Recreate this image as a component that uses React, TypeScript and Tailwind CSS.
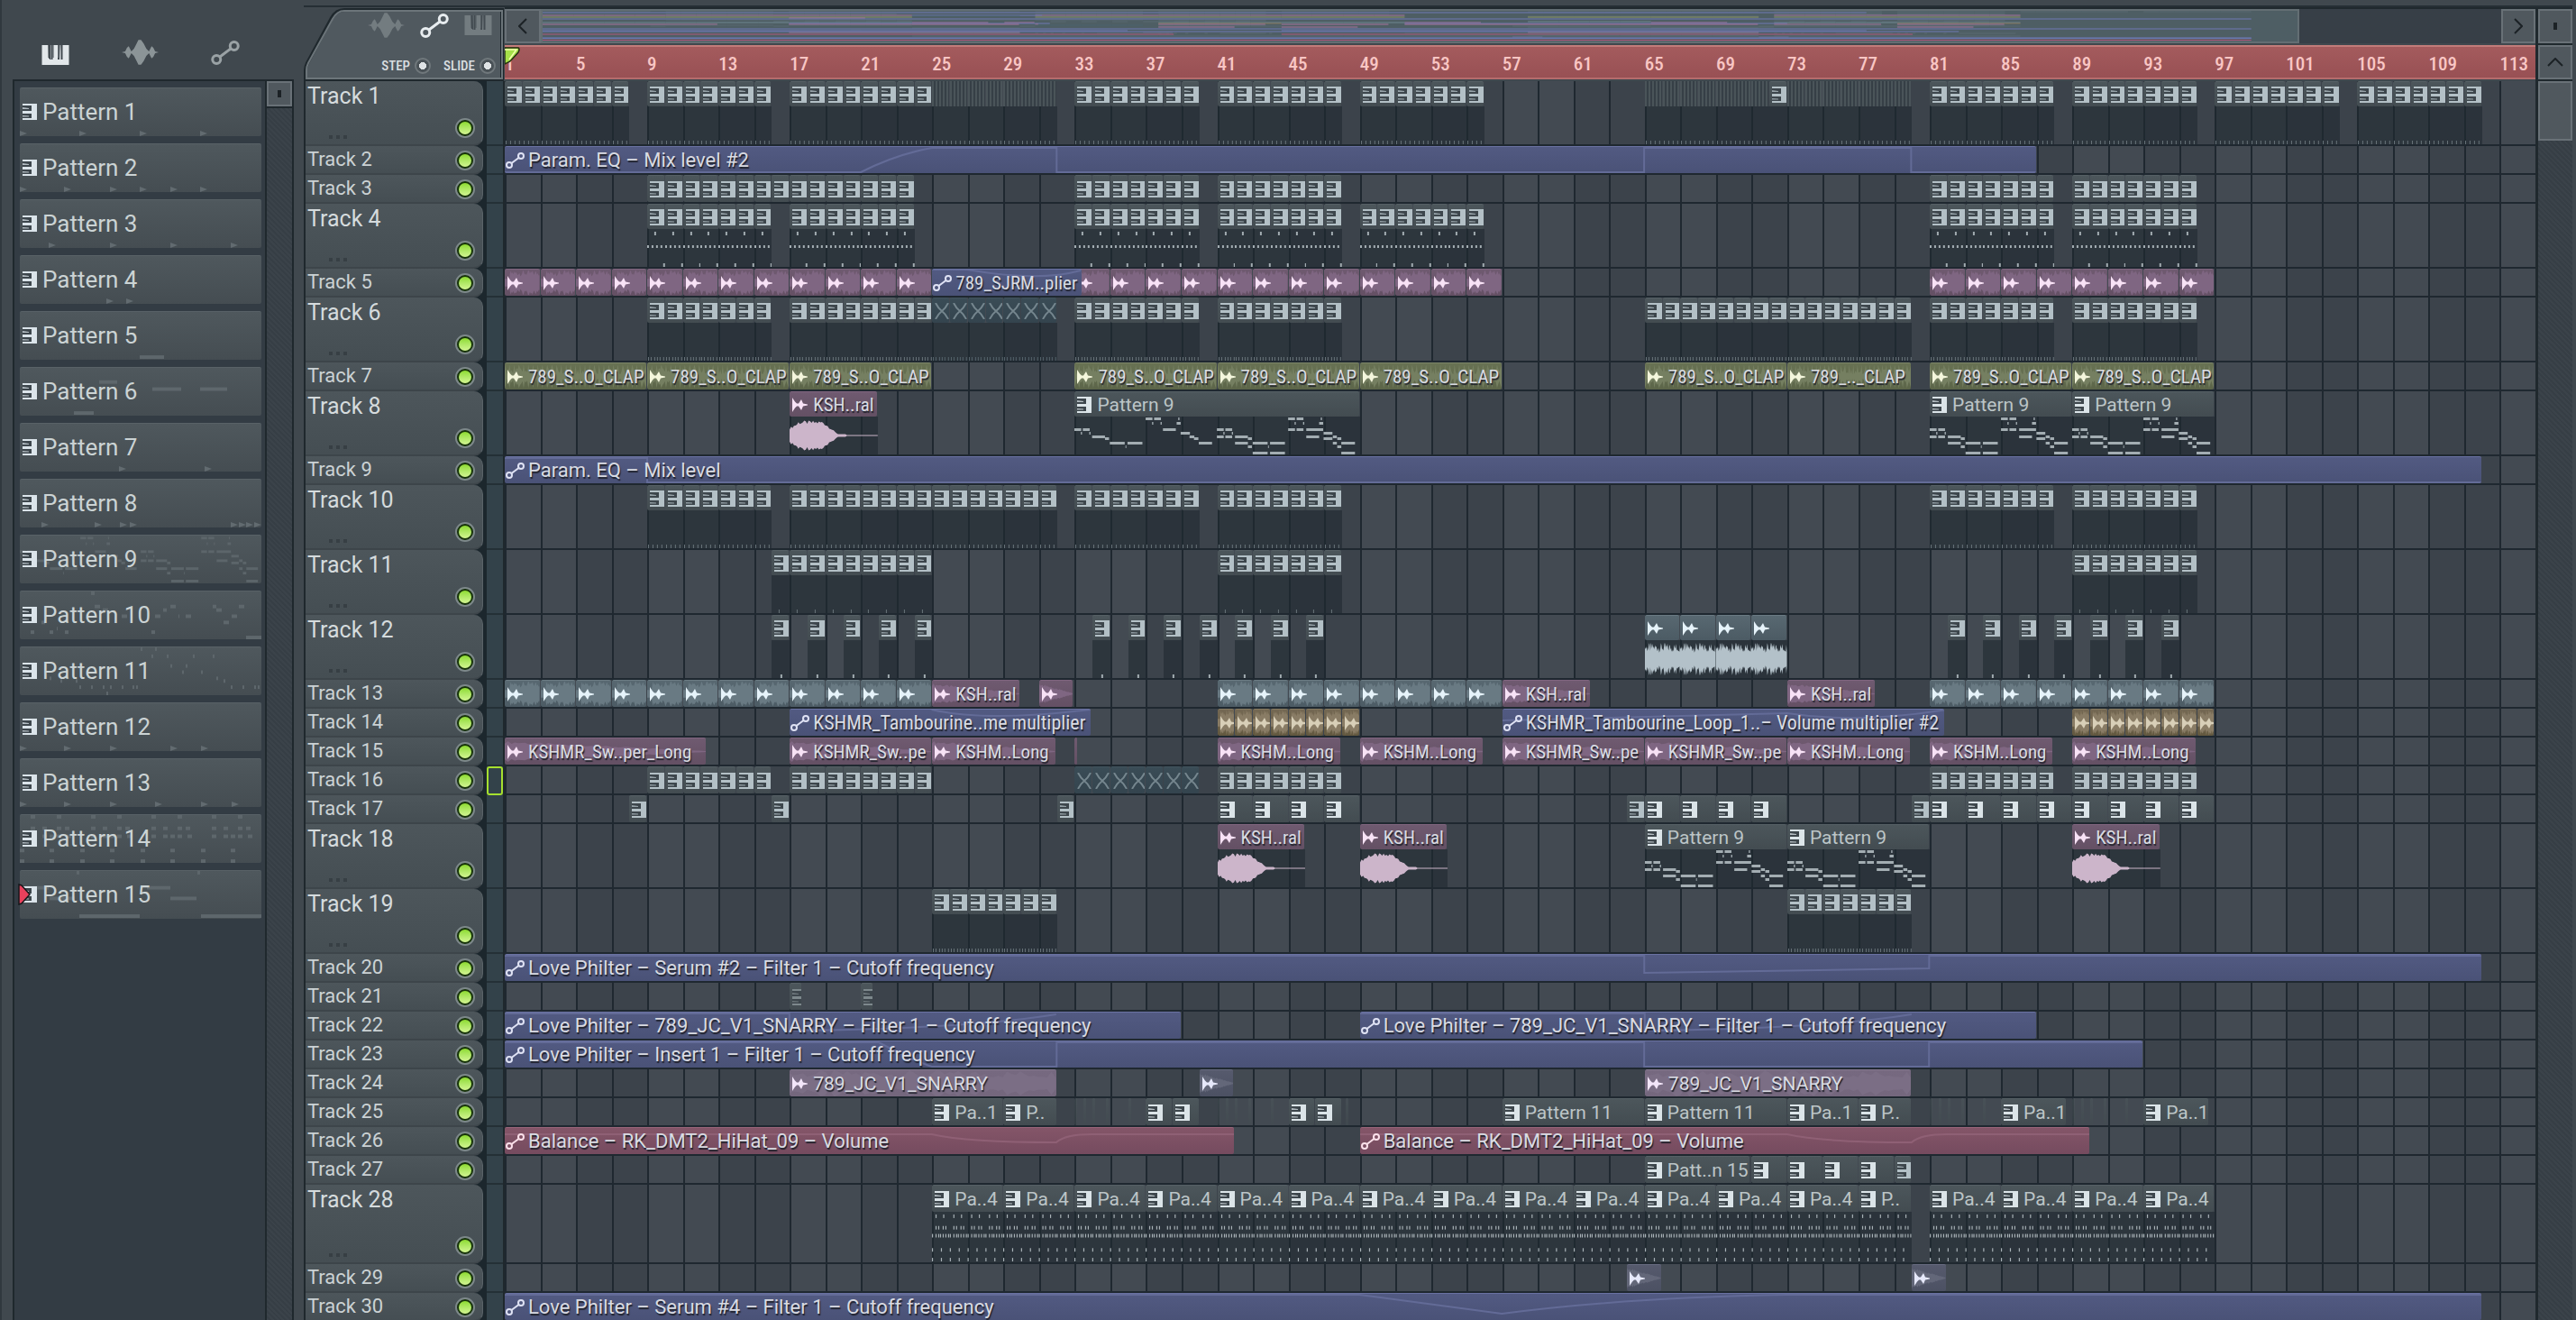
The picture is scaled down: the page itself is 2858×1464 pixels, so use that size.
import type { ReactNode } from "react"

type Kind = "pattern" | "audio" | "automation" | "muted" | "stripes" | "sliver"

type Tone =
  | "grey"
  | "blue"
  | "pink"
  | "olive"
  | "slate"
  | "brown"
  | "purple"
  | "red"
  | "dusk"
  | "teal"

type Clip = {
  kind: Kind
  tone: Tone
  start: number
  length: number
  label?: string
  narrow?: boolean
  curve?: string
  body?: string
}

type Track = {
  id: number
  size: "small" | "tall" | "large"
  clips: Clip[]
}

const BARS = 114

const toneClass: Record<Tone, string> = {
  grey: "from-[#4c565b] to-[#434c51] border-t-[#566065]",
  blue: "from-[#525a82] to-[#4a5277] border-t-[#6a72a2]",
  pink: "from-[#6f5a70] to-[#645064] border-t-[#80657f]",
  olive: "from-[#687253] to-[#5c6549] border-t-[#7b8468]",
  slate: "from-[#586871] to-[#4c5b64] border-t-[#6b7b83]",
  brown: "from-[#746853] to-[#62583f] border-t-[#867960]",
  purple: "from-[#766980] to-[#74677d] border-t-[#85788f]",
  red: "from-[#845568] to-[#754b5f] border-t-[#996579]",
  dusk: "from-[#565a6d] to-[#4c5163] border-t-[#676b80]",
  teal: "from-[#3a4c56] to-[#34444e] border-t-[#42545e]",
}

const iconClass: Record<Tone, string> = {
  grey: "text-[#dbe4e8]",
  blue: "text-[#dfe2f4]",
  pink: "text-[#f8e2f6]",
  olive: "text-[#f4f6dc]",
  slate: "text-[#e6f3fa]",
  brown: "text-[#d8cfb8]",
  purple: "text-[#f3e6fa]",
  red: "text-[#fbe0ea]",
  dusk: "text-[#e6e8fa]",
  teal: "text-[#75868e]",
}

const toneFill: Record<Tone, string> = {
  grey: "#66757b",
  blue: "#6f78b4",
  pink: "#a7759d",
  olive: "#8b9665",
  slate: "#6e8590",
  brown: "#86795c",
  purple: "#8f7a9d",
  red: "#b0587c",
  dusk: "#6d7190",
  teal: "#4b626d",
}

const waveFill: Record<Tone, string> = {
  grey: "#5c666b",
  blue: "#5b6390",
  pink: "#7f6682",
  olive: "#757f61",
  slate: "#697a83",
  brown: "#897c65",
  purple: "#7b6e85",
  red: "#8b6072",
  dusk: "#636779",
  teal: "#42545e",
}

const repeat = (
  starts: number[],
  count: number,
  step: number,
  base: Omit<Clip, "start" | "length">,
  length = step,
): Clip[] =>
  starts.flatMap((first) =>
    Array.from({ length: count }, (_, i) => ({
      ...base,
      start: first + i * step,
      length,
    })),
  )

const pat = (body?: string) => ({ kind: "pattern" as Kind, tone: "grey" as Tone, body })
const named = (start: number, length: number, label: string, body?: string): Clip => ({
  ...pat(body),
  start,
  length,
  label,
})
const audio = (tone: Tone) => ({ kind: "audio" as Kind, tone })
const sample = (tone: Tone, start: number, length: number, label?: string, body?: string): Clip => ({
  ...audio(tone),
  start,
  length,
  label,
  narrow: true,
  body,
})
const auto = (
  start: number,
  length: number,
  label: string,
  curve?: string,
  tone: Tone = "blue",
  narrow = false,
): Clip => ({ kind: "automation", tone, start, length, label, curve, narrow })
const slivers = (starts: number[]): Clip[] =>
  starts.map((start) => ({ kind: "sliver", tone: "grey", start, length: 0.2 }))
const muted = (starts: number[]) =>
  repeat(starts, 7, 1, { kind: "muted", tone: "teal", body: "fine" })

const BALANCE = "Balance – RK_DMT2_HiHat_09 – Volume"
const SNARRY = "Love Philter – 789_JC_V1_SNARRY – Filter 1 – Cutoff frequency"
const CLAP = "789_S..O_CLAP"

const tracks: Track[] = [
  {
    id: 1,
    size: "tall",
    clips: [
      ...repeat([1, 9, 33, 41, 49, 81, 89, 97, 105], 7, 1, pat("ticks")),
      ...repeat([17], 8, 1, pat("ticks")),
      ...repeat([25], 7, 1, { kind: "stripes", tone: "grey", body: "ticks" }),
      ...repeat([65], 7, 1, { kind: "stripes", tone: "grey", body: "ticks" }),
      ...repeat([72], 1, 1, pat("ticks")),
      ...repeat([73], 7, 1, { kind: "stripes", tone: "grey", body: "ticks" }),
    ],
  },
  {
    id: 2,
    size: "small",
    clips: [auto(1, 86, "Param. EQ – Mix level #2", "M0 28H20Q22 8 24 1H31V28H64V1H79V28H86")],
  },
  {
    id: 3,
    size: "small",
    clips: [...repeat([9], 15, 1, pat()), ...repeat([33, 41, 81, 89], 7, 1, pat())],
  },
  { id: 4, size: "tall", clips: repeat([9, 17, 33, 41, 49, 81, 89], 7, 1, pat("beats")) },
  {
    id: 5,
    size: "small",
    clips: [
      ...repeat([1], 12, 2, audio("pink")),
      ...repeat([33], 12, 2, audio("pink")),
      ...repeat([81], 8, 2, audio("pink")),
      auto(25, 8.45, "789_SJRM..plier", "M0 0H2Q6 14 8.4 1", "blue", true),
    ],
  },
  {
    id: 6,
    size: "tall",
    clips: [
      ...repeat([9, 33, 41, 81, 89], 7, 1, pat("fine")),
      ...repeat([17], 8, 1, pat("fine")),
      ...muted([25]),
      ...repeat([65], 15, 1, pat("fine")),
    ],
  },
  {
    id: 7,
    size: "small",
    clips: [
      ...[1, 9, 17, 33, 41, 49, 65, 81, 89].map((bar) => sample("olive", bar, 8, CLAP)),
      sample("olive", 73, 7, "789_.._CLAP"),
    ],
  },
  {
    id: 8,
    size: "tall",
    clips: [
      sample("pink", 17, 4.95, "KSH..ral", "shot"),
      named(33, 16, "Pattern 9", "melody"),
      named(81, 8, "Pattern 9", "chords"),
      named(89, 8, "Pattern 9", "chords"),
    ],
  },
  { id: 9, size: "small", clips: [auto(1, 111, "Param. EQ – Mix level", "M0 1H8V28H111")] },
  {
    id: 10,
    size: "tall",
    clips: [
      ...repeat([9, 33, 41, 81, 89], 7, 1, pat("ticks")),
      ...repeat([17], 15, 1, pat("ticks")),
    ],
  },
  {
    id: 11,
    size: "tall",
    clips: [...repeat([16], 9, 1, pat("kick")), ...repeat([41, 89], 7, 1, pat("kick"))],
  },
  {
    id: 12,
    size: "tall",
    clips: [
      ...repeat([16], 5, 2, pat("single"), 1),
      ...repeat([34, 82], 7, 2, pat("single"), 1),
      ...repeat([65], 4, 2, { ...audio("slate"), body: "noise" }),
    ],
  },
  {
    id: 13,
    size: "small",
    clips: [
      ...repeat([1], 12, 2, audio("slate")),
      sample("pink", 25, 4.95, "KSH..ral"),
      sample("pink", 31, 1.95),
      ...repeat([41, 81], 8, 2, audio("slate")),
      sample("pink", 57, 4.95, "KSH..ral"),
      sample("pink", 73, 4.95, "KSH..ral"),
    ],
  },
  {
    id: 14,
    size: "small",
    clips: [
      auto(17, 16.95, "KSHMR_Tambourine..me multiplier", "M8 0Q11 14 17 0", "blue", true),
      ...repeat([41, 89], 8, 1, audio("brown")),
      auto(
        57,
        24.85,
        "KSHMR_Tambourine_Loop_1..– Volume multiplier #2",
        "M0 12L16 4Q20 16 25 0",
        "blue",
        true,
      ),
    ],
  },
  {
    id: 15,
    size: "small",
    clips: [
      sample("pink", 1, 11.35, "KSHMR_Sw..per_Long"),
      sample("pink", 17, 8, "KSHMR_Sw..pe"),
      sample("pink", 25, 6.95, "KSHM..Long"),
      { kind: "sliver", tone: "pink", start: 33, length: 0.2 },
      sample("pink", 41, 6.95, "KSHM..Long"),
      sample("pink", 49, 6.95, "KSHM..Long"),
      sample("pink", 57, 8, "KSHMR_Sw..pe"),
      sample("pink", 65, 8, "KSHMR_Sw..pe"),
      sample("pink", 73, 6.95, "KSHM..Long"),
      sample("pink", 81, 6.95, "KSHM..Long"),
      sample("pink", 89, 6.95, "KSHM..Long"),
    ],
  },
  {
    id: 16,
    size: "small",
    clips: [
      ...repeat([9, 41, 81, 89], 7, 1, pat()),
      ...repeat([17], 8, 1, pat()),
      ...muted([33]),
    ],
  },
  {
    id: 17,
    size: "small",
    clips: [
      ...repeat([8, 16, 32, 64, 80], 1, 1, pat()),
      ...repeat([41, 65], 4, 2, pat()),
      ...repeat([81], 8, 2, pat()),
    ],
  },
  {
    id: 18,
    size: "tall",
    clips: [
      sample("pink", 41, 4.95, "KSH..ral", "shot"),
      sample("pink", 49, 4.95, "KSH..ral", "shot"),
      named(65, 8, "Pattern 9", "chords"),
      named(73, 8, "Pattern 9", "chords"),
      sample("pink", 89, 4.95, "KSH..ral", "shot"),
    ],
  },
  { id: 19, size: "tall", clips: repeat([25, 73], 7, 1, pat("fine")) },
  {
    id: 20,
    size: "small",
    clips: [
      auto(1, 111, "Love Philter – Serum #2 – Filter 1 – Cutoff frequency", "M0 1H64V20L80 15V1H111"),
    ],
  },
  { id: 21, size: "small", clips: repeat([17, 21], 1, 1, pat(), 0.7) },
  {
    id: 22,
    size: "small",
    clips: [
      auto(1, 38, SNARRY, "M0 1H16V20Q26 18 31 2"),
      auto(49, 38, SNARRY, "M0 1H16V20Q26 18 31 2"),
    ],
  },
  {
    id: 23,
    size: "small",
    clips: [
      auto(
        1,
        92,
        "Love Philter – Insert 1 – Filter 1 – Cutoff frequency",
        "M0 1H21Q23 22 24 28H31V1H64V28H80V1H92",
      ),
    ],
  },
  {
    id: 24,
    size: "small",
    clips: [
      { ...audio("purple"), start: 17, length: 15, label: "789_JC_V1_SNARRY" },
      sample("dusk", 40, 1.95),
      { ...audio("purple"), start: 65, length: 15, label: "789_JC_V1_SNARRY" },
    ],
  },
  {
    id: 25,
    size: "small",
    clips: [
      named(25, 4, "Pa..1"),
      named(29, 3, "P.."),
      ...slivers([33, 33.5, 34, 34.75, 36, 41, 41.5, 42, 42.75, 44, 48.2]),
      ...repeat([37], 2, 1.5, pat()),
      ...repeat([45], 2, 1.5, pat()),
      named(57, 8, "Pattern 11"),
      named(65, 8, "Pattern 11"),
      named(73, 4, "Pa..1"),
      named(77, 3, "P.."),
      ...slivers([81, 81.5, 82, 82.75, 84, 89, 89.5, 90, 90.75, 92]),
      named(85, 3.7, "Pa..1"),
      named(93, 3.7, "Pa..1"),
    ],
  },
  {
    id: 26,
    size: "small",
    clips: [
      auto(1, 41, BALANCE, "M0 7H24Q26 16 31 16Q31.5 7 33 7H41", "red"),
      auto(49, 41, BALANCE, "M0 7H24Q26 16 31 16Q31.5 7 33 7H41", "red"),
    ],
  },
  {
    id: 27,
    size: "small",
    clips: [
      named(65, 5.95, "Patt..n 15"),
      ...repeat([71], 4, 2, pat()),
      ...repeat([79], 1, 1, pat()),
    ],
  },
  {
    id: 28,
    size: "large",
    clips: [
      ...repeat([25], 13, 4, { ...pat("drums"), label: "Pa..4" }),
      named(77, 3, "P..", "drums"),
      ...repeat([81], 4, 4, { ...pat("drums"), label: "Pa..4" }),
    ],
  },
  { id: 29, size: "small", clips: [sample("dusk", 64, 1.95), sample("dusk", 80, 1.95)] },
  {
    id: 30,
    size: "small",
    clips: [
      auto(
        1,
        111,
        "Love Philter – Serum #4 – Filter 1 – Cutoff frequency",
        "M0 1H48L56 22Q63 4 72 1H111",
      ),
    ],
  },
]

// [x, y, width] on a 354 x 43 grid that spans eight bars
type Note = [number, number, number]

const melody: Note[] = [
  [0, 13, 17], [21, 13, 17], [16, 17, 3], [37, 17, 3], [44, 21, 32], [76, 23, 10],
  [88, 28, 37], [132, 28, 37], [127, 32, 2], [177, 1, 17], [198, 1, 17], [193, 6, 3],
  [214, 6, 3], [254, 6, 10], [258, 1, 3], [220, 13, 32], [264, 17, 23], [286, 21, 12],
  [297, 23, 11], [309, 28, 33],
]

const chords: Note[] = [
  [0, 13, 17], [21, 13, 17], [16, 17, 3], [37, 17, 3], [0, 21, 17], [21, 21, 17],
  [45, 21, 32], [45, 28, 32], [77, 23, 10], [77, 32, 10], [89, 28, 37], [132, 28, 37],
  [127, 32, 2], [89, 39, 37], [132, 39, 37], [177, 1, 17], [198, 1, 17], [193, 6, 3],
  [214, 6, 3], [254, 6, 10], [258, 1, 3], [177, 13, 17], [198, 13, 17], [222, 13, 42],
  [222, 21, 32], [265, 17, 22], [265, 23, 22], [288, 21, 10], [299, 23, 10], [288, 28, 10],
  [299, 32, 10], [309, 28, 34], [309, 39, 34],
]

const fullPattern9: Note[] = [
  ...melody,
  ...chords.map(([x, y, w]): Note => [x + 354, y, w]),
]

// [x, y, width] on the 268 x 54 face of a picker button
const pattern14: Note[] = [0, 67, 134, 201].flatMap((x): Note[] => [
  [x + 12, 0, 5], [x + 41, 0, 5],
  [x + 12, 13, 5], [x + 25, 13, 5], [x + 41, 13, 5], [x + 50, 13, 5],
  [x + 12, 22, 5], [x + 25, 22, 5], [x + 33, 22, 5], [x + 41, 22, 5], [x + 52, 22, 5],
  [x, 38, 5], [x + 33, 38, 5], [x, 50, 5], [x + 33, 50, 5],
])

const previews: Record<number, Note[]> = {
  5: [[133, 49, 27]],
  6: [[88, 14, 20], [147, 22, 32], [200, 22, 30], [60, 49, 22]],
  10: [
    [79, 0, 4], [83, 15, 6], [92, 19, 6], [113, 26, 6], [24, 33, 4], [12, 44, 4], [33, 44, 4],
    [41, 40, 1], [50, 44, 4], [150, 26, 6], [159, 19, 4], [167, 15, 6], [176, 26, 1],
    [184, 26, 6], [146, 44, 4], [214, 15, 4], [218, 19, 6], [226, 33, 6], [235, 26, 6],
    [243, 15, 6], [251, 50, 17],
  ],
  11: [
    [134, 0, 2], [150, 0, 2], [146, 8, 2], [163, 8, 2], [192, 8, 2], [214, 8, 2], [167, 19, 2],
    [184, 19, 2], [180, 26, 2], [201, 26, 2], [218, 33, 2], [226, 36, 2], [33, 33, 2],
    [45, 36, 2], [62, 36, 2], [66, 43, 2], [79, 43, 2], [92, 43, 2], [100, 43, 2], [113, 43, 2],
    [125, 43, 2], [129, 43, 2], [96, 50, 2], [234, 43, 2], [247, 43, 2], [260, 43, 2],
    [264, 43, 2],
  ],
  14: pattern14,
  15: [
    [63, 0, 3], [197, 0, 3], [6, 17, 26], [141, 17, 26], [33, 29, 28], [167, 29, 29],
    [66, 49, 67], [201, 49, 67],
  ],
}

const triangles: Record<number, number[]> = {
  1: [0, 66, 133, 200],
  2: [0, 49, 100, 133, 167, 200],
  3: [32, 100, 167, 234],
  4: [96, 118],
  7: [110, 205],
  8: [24, 83, 111, 122, 234, 243, 251, 260],
  12: [0, 49, 100, 167, 201],
  13: [0, 49, 100, 150, 201, 235],
}

function noise(n: number) {
  const v = Math.sin(n * 12.9898) * 43758.5453
  return v - Math.floor(v)
}

// Mirrored outline around the middle of a 100-unit high box
function outline(points: number, level: (t: number, i: number) => number) {
  const top: string[] = []
  const bottom: string[] = []
  for (let i = 0; i <= points; i++) {
    const v = level(i / points, i) * 50
    top.push(`${i},${(50 - v).toFixed(1)}`)
    bottom.unshift(`${i},${(50 + v).toFixed(1)}`)
  }
  return [...top, ...bottom].join(" ")
}

const noiseWave = outline(60, (_, i) => 0.4 + noise(i + 3) * 0.6)
const loopWave = outline(40, (t, i) => (t < 0.15 ? 0.3 : 0.5 + noise(i + 9) * 0.45))
const clapWave = outline(120, (_, i) => (i % 4 === 0 ? 0.9 : 0.15 + noise(i) * 0.5))
const shotWave = outline(60, (t, i) => {
  const envelope = t < 0.1 ? 0.45 + t * 3 : t < 0.38 ? 0.82 : Math.max(0, 0.82 - (t - 0.38) * 4.4)
  return Math.max(0.025, envelope * (0.82 + noise(i) * 0.3), t > 0.5 && t < 0.65 ? 0.08 : 0)
})
const sweepWave = outline(60, (t, i) => (0.75 - t * 0.7) * (0.8 + noise(i) * 0.3))

function PianoIcon({ className = "" }: { className?: string }) {
  return (
    <svg viewBox="0 0 16 18" className={`h-[18px] w-4 shrink-0 ${className}`} aria-hidden="true">
      <path fill="currentColor" d="M0 0H16V18H0V16H10V11H0V8H10V2H0Z" />
      <path fill="#3d464c" d="M0 2H10V8H0ZM0 11H10V16H0Z" />
      <path fill="currentColor" d="M0 4L7 5V6H0ZM0 13L7 13.5V14.500H0Z" opacity=".75" />
    </svg>
  )
}

function SampleIcon({ className = "" }: { className?: string }) {
  return (
    <svg viewBox="0 0 17 16" className={`h-4 w-[17px] shrink-0 ${className}`} aria-hidden="true">
      <path
        fill="currentColor"
        d="M0 0L3 4.500L5 6.500L7 6.500L10 2L12 6.500L17 7.500V8.500L12 9.500L10 14L7 9.500H5L3 11.500L0 16Z"
      />
    </svg>
  )
}

function CurveIcon({ className = "" }: { className?: string }) {
  return (
    <svg viewBox="0 0 21 18" className={className} fill="none" stroke="currentColor" aria-hidden="true">
      <circle cx="4" cy="14" r="3" strokeWidth="2" />
      <circle cx="17" cy="4" r="3" strokeWidth="2" />
      <path d="M6.500 12L14.500 6" strokeWidth="2" />
    </svg>
  )
}

function KeysIcon({ className = "" }: { className?: string }) {
  return (
    <svg viewBox="0 0 30 22" className={className} aria-hidden="true">
      <path
        fill="currentColor"
        d="M0 0H7V14H8.500V16H9.500V0H12V14H13V0H18V14H17.500V16H19V14V0H21L22 14H22.500V0H30V22H0Z"
      />
      <path fill="#434b51" d="M7 0H8.500L9.500 15H7.500ZM10 0H12V16H10ZM18 0H20L19.500 16H18ZM21 0H23V16H21Z" />
    </svg>
  )
}

function WaveIcon({ className = "" }: { className?: string }) {
  return (
    <svg viewBox="0 0 42 28" className={className} aria-hidden="true">
      <path
        fill="currentColor"
        d="M0 14L4 13L6 9L8 7L11 13L14 10L17 4L19 0H22L25 4L28 10L31 13L34 7L36 9L38 13L42 14L38 15L36 19L34 21L31 15L28 18L25 24L22 28H19L17 24L14 18L11 15L8 21L6 19L4 15Z"
      />
    </svg>
  )
}

function Wave({ points, className, fill }: { points: string; className: string; fill: string }) {
  const width = points === clapWave ? 120 : points === loopWave ? 40 : 60
  return (
    <svg viewBox={`0 0 ${width} 100`} preserveAspectRatio="none" className={className} aria-hidden="true">
      <polygon points={points} fill={fill} />
    </svg>
  )
}

const drumRows: [number, number[]][] = [
  [3, [0.2, 0.63]],
  [16, [0.2, 0.35, 0.6, 0.75]],
  [25, [0, 0.2, 0.35, 0.45, 0.6, 0.75, 0.9]],
  [41, [0, 0.5]],
  [52, [0, 0.5]],
]

// [x, y, height] on a 20 x 42 grid that spans one bar
const tickRows: Record<string, [number, number, number][]> = {
  beats: [[8, 3, 4], [18, 38, 4], [0, 18, 3], [5, 18, 3], [10, 18, 3], [15, 18, 3]],
  kick: [[8, 38, 4]],
  single: [[10, 38, 4]],
  fine: [[1, 38, 4], [4, 38, 4], [8, 38, 4], [11, 38, 4], [14, 38, 4], [18, 38, 4]],
  ticks: [[1, 38, 4], [6, 38, 4], [11, 38, 4], [16, 38, 4]],
}

function ClipBody({ clip }: { clip: Clip }) {
  const { body, length, tone } = clip
  const bars = Array.from({ length: Math.ceil(length) }, (_, i) => i)

  if (body === "shot") {
    return <Wave points={shotWave} className="h-full w-full py-[3px]" fill="#ccb5ca" />
  }
  if (body === "noise") {
    return <Wave points={noiseWave} className="h-full w-full py-[3px]" fill="#b3c1c9" />
  }
  if (body === "melody" || body === "chords") {
    const notes = body === "melody" ? fullPattern9 : chords
    return (
      <svg
        viewBox={`0 0 ${body === "melody" ? 708 : 354} 42`}
        preserveAspectRatio="none"
        className="h-full w-full"
        aria-hidden="true"
      >
        {notes.map(([x, y, w], i) => (
          <rect key={i} x={x} y={y} width={w} height="3" fill="#a3adb2" />
        ))}
      </svg>
    )
  }
  if (body === "drums") {
    return (
      <svg
        viewBox={`0 0 ${length * 20} 57`}
        preserveAspectRatio="none"
        className="h-full w-full"
        aria-hidden="true"
      >
        {bars.map((bar) =>
          drumRows.map(([y, hits]) =>
            hits.map((hit) => (
              <rect key={`${bar}-${y}-${hit}`} x={(bar + hit) * 20} y={y} width="1.2" height="4" fill="#a9b2b7" />
            )),
          ),
        )}
      </svg>
    )
  }

  const bright = body === "beats" || body === "single"

  return (
    <svg viewBox="0 0 20 42" preserveAspectRatio="none" className="h-full w-full" aria-hidden="true">
      {tickRows[body ?? "ticks"].map(([x, y, h]) => (
        <rect
          key={`${x}-${y}`}
          x={x}
          y={y}
          width={bright ? 2 : 1}
          height={h}
          fill={tone === "teal" ? "#54636b" : bright ? "#a3adb2" : "#69747a"}
        />
      ))}
    </svg>
  )
}

function ClipBackdrop({ clip }: { clip: Clip }) {
  if (clip.curve) {
    return (
      <svg
        viewBox={`0 0 ${clip.length} 29`}
        preserveAspectRatio="none"
        className="h-full w-full"
        aria-hidden="true"
      >
        <path
          d={clip.curve}
          fill="none"
          stroke={clip.tone === "red" ? "#8f6075" : "#636b97"}
          strokeWidth="2"
          vectorEffect="non-scaling-stroke"
        />
      </svg>
    )
  }
  if (clip.kind === "audio" && !clip.body) {
    const points =
      clip.tone === "olive"
        ? clapWave
        : clip.tone === "purple"
          ? noiseWave
          : clip.narrow
            ? sweepWave
            : loopWave
    return <Wave points={points} className="h-full w-full" fill={waveFill[clip.tone]} />
  }
  return null
}

function ClipIcon({ clip }: { clip: Clip }) {
  if (clip.kind === "automation") {
    return <CurveIcon className={`-ml-0.5 h-[18px] w-[21px] shrink-0 ${iconClass[clip.tone]}`} />
  }
  if (clip.kind === "audio") {
    return <SampleIcon className={iconClass[clip.tone]} />
  }
  if (clip.kind === "muted") {
    return (
      <svg viewBox="0 0 17 18" className="h-[18px] w-[17px] shrink-0 text-[#75868e]" aria-hidden="true">
        <path
          fill="none"
          stroke="currentColor"
          strokeWidth="2"
          d="M1 0Q4 6 8 9Q12 12 15 18M15 0Q12 6 8 9Q4 12 1 18"
        />
      </svg>
    )
  }
  if (clip.length < 1) {
    return <PianoIcon className="text-[#7d888c]" />
  }
  return <PianoIcon className={clip.length > 1 ? iconClass.grey : "text-[#b3c0c6]"} />
}

function ClipLabel({ clip }: { clip: Clip }) {
  const tone =
    clip.kind === "pattern" ? "text-[#bcc5c7]" : "text-[#d9dbe2] [text-shadow:1px_2px_1px_#20222c]"
  const font = clip.narrow ? "font-['Roboto_Condensed','Roboto',sans-serif]" : ""
  const size = clip.kind === "automation" && clip.length > 10 ? "text-[22px]" : "text-[21px]"
  const pad = clip.kind === "automation" ? "pl-1" : "pl-1.5"

  return (
    <span className={`whitespace-nowrap leading-6 ${tone} ${font} ${size} ${pad}`}>{clip.label}</span>
  )
}

function ClipView({ clip, size }: { clip: Clip; size: Track["size"] }) {
  const first = Math.floor(clip.start)
  const span = Math.ceil(clip.start + clip.length) - first
  const headHeight = size === "small" ? "h-full" : size === "tall" ? "h-7" : "h-[30px]"

  return (
    <div
      className="row-start-1 flex h-full min-w-0 flex-col"
      style={{
        gridColumn: `${first} / span ${span}`,
        width: `${(clip.length / span) * 100}%`,
        marginLeft: `${((clip.start - first) / span) * 100}%`,
      }}
    >
      <div className={`min-w-0 shrink-0 pr-px ${headHeight}`}>
        {clip.kind === "stripes" ? (
          <div className="h-full bg-[repeating-linear-gradient(90deg,#4a5459_0_2px,#363f46_2px_4px)]" />
        ) : (
          <div
            className={`grid h-full overflow-hidden rounded-[2px] border-t bg-gradient-to-b ${toneClass[clip.tone]} ${
              clip.kind === "sliver" && clip.tone === "grey" ? "opacity-60" : ""
            }`}
          >
            <div className="col-start-1 row-start-1 h-full min-h-0 min-w-0">
              <ClipBackdrop clip={clip} />
            </div>
            {clip.kind !== "sliver" && (
              <div className="col-start-1 row-start-1 flex min-w-0 items-center overflow-hidden pl-[3px]">
                <ClipIcon clip={clip} />
                {clip.label && <ClipLabel clip={clip} />}
              </div>
            )}
          </div>
        )}
      </div>
      {size !== "small" && (
        <div className="min-h-0 flex-1 bg-[#202a31]/60">
          <ClipBody clip={clip} />
        </div>
      )}
    </div>
  )
}

const rowHeight: Record<Track["size"], string> = {
  small: "h-8",
  tall: "h-[72px]",
  large: "h-[88px]",
}

function Lane({ track }: { track: Track }) {
  return (
    <div
      className={`grid grid-cols-[repeat(114,minmax(0,1fr))] grid-rows-[minmax(0,1fr)] border-b-2 border-[#1f2830] ${rowHeight[track.size]}`}
    >
      {track.clips.map((clip, i) => (
        <ClipView key={i} clip={clip} size={track.size} />
      ))}
    </div>
  )
}

function TrackHeader({ track }: { track: Track }) {
  const small = track.size === "small"
  return (
    <div
      className={`flex shrink-0 justify-between rounded-r-[10px] border-b-2 border-r border-b-[#3d454a] border-r-[#5a6368] bg-gradient-to-b from-[#4d565b] to-[#454e53] pl-0.5 pr-2 ${rowHeight[track.size]}`}
    >
      <div className="flex flex-col justify-between">
        <span
          className={
            small
              ? "pt-px text-[22px] leading-7 text-[#cbd2d4]"
              : "pt-px text-[25px] leading-8 text-[#d5dbdd]"
          }
        >
          Track {track.id}
        </span>
        {!small && (
          <span className="flex gap-1 pb-1.5 pl-6" aria-hidden="true">
            <i className="size-1 bg-[#373f44]" />
            <i className="size-1 bg-[#373f44]" />
            <i className="size-1 bg-[#373f44]" />
          </span>
        )}
      </div>
      <button
        type="button"
        aria-pressed="true"
        aria-label={`Mute track ${track.id}`}
        className={`size-[22px] self-end rounded-full border-2 border-[#7d888a] bg-[#17330a] p-0.5 ${
          small ? "mb-[3px]" : "mb-[7px]"
        }`}
      >
        <span className="block size-full rounded-full bg-gradient-to-b from-[#8ddb2c] to-[#d2f590]" />
      </button>
    </div>
  )
}

function PatternButton({ id }: { id: number }) {
  return (
    <button
      type="button"
      className="relative grid h-[54px] w-full shrink-0 rounded-[2px] border-t border-[#596267] bg-gradient-to-b from-[#4f585d] to-[#454d52] text-left"
    >
      <svg
        viewBox="0 0 268 54"
        preserveAspectRatio="none"
        className="col-start-1 row-start-1 h-[53px] w-full"
        aria-hidden="true"
      >
        {previews[id]?.map(([x, y, w], i) => (
          <rect key={i} x={x} y={y} width={w} height="4" fill="#5e676c" />
        ))}
        {id === 9 &&
          fullPattern9.map(([x, y, w], i) => (
            <rect key={i} x={x * 0.379} y={y * 1.28} width={w * 0.379} height="3" fill="#5c656a" />
          ))}
        {triangles[id]?.map((x) => (
          <path key={x} d={`M${x} 48L${x + 8} 51L${x} 54Z`} fill="#626b70" />
        ))}
      </svg>
      <span className="col-start-1 row-start-1 flex items-center gap-1.5 pb-0.5 pl-[3px] text-[26px] leading-none text-[#cbd3d4]">
        <PianoIcon className="text-[#dbe4ea]" />
        Pattern {id}
      </span>
      {id === 15 && (
        <svg viewBox="0 0 14 24" className="absolute -left-0.5 top-3.5 h-6 w-3.5" aria-hidden="true">
          <path d="M1 1L4 2L13 12L4 22L1 23Z" fill="#e8415c" stroke="#16181b" strokeWidth="1.5" />
        </svg>
      )}
    </button>
  )
}

function IconButton({
  label,
  className = "",
  children,
}: {
  label: string
  className?: string
  children: ReactNode
}) {
  return (
    <button
      type="button"
      aria-label={label}
      className={`flex shrink-0 items-center justify-center border-2 border-[#697177] bg-[#50585e] text-[#1c2226] ${className}`}
    >
      {children}
    </button>
  )
}

function PatternPicker() {
  return (
    <aside className="flex w-[326px] shrink-0 flex-col border-l-2 border-[#30383e] pl-3">
      <div className="flex h-[88px] shrink-0 items-end pb-4 pl-8">
        <button type="button" aria-label="Patterns" className="text-[#e2e7ea]">
          <KeysIcon className="h-[22px] w-[31px]" />
        </button>
        <button type="button" aria-label="Audio clips" className="ml-[58px] text-[#8b9497]">
          <WaveIcon className="h-7 w-[41px]" />
        </button>
        <button type="button" aria-label="Automation clips" className="ml-[58px] text-[#9aa2a5]">
          <CurveIcon className="h-[27px] w-8" />
        </button>
      </div>
      <div className="flex min-h-0 flex-1 border-2 border-b-0 border-[#1f282d]">
        <div className="flex min-w-0 flex-1 flex-col gap-2 bg-[#333c44] pl-1.5 pr-1 pt-[7px]">
          {Array.from({ length: 15 }, (_, i) => (
            <PatternButton key={i} id={i + 1} />
          ))}
        </div>
        <div className="flex w-[30px] shrink-0 flex-col border-l-2 border-[#1f282d] bg-[repeating-linear-gradient(45deg,#3b434a_0_2px,#363e45_2px_4px)]">
          <IconButton label="Picker menu" className="h-7 w-full">
            <i className="h-2 w-1 bg-[#1c2226]" />
          </IconButton>
          <div className="h-0.5 bg-[#1f282d]" />
        </div>
      </div>
    </aside>
  )
}

function ModeRadio({ label }: { label: string }) {
  return (
    <label className="flex items-center gap-[5px] font-['Roboto_Condensed','Roboto',sans-serif] text-[15px] font-medium leading-none text-[#d9dee0]">
      {label}
      <input
        type="radio"
        name={label}
        defaultChecked
        className="size-[18px] appearance-none rounded-full border-2 border-[#70787c] bg-[#4a5257] checked:bg-[radial-gradient(circle,#dfe3e5_0_4px,#4a5257_4px)]"
      />
    </label>
  )
}

function ToolTab() {
  return (
    <div className="grid h-[82px] w-[223px]">
      <svg viewBox="0 0 223 82" className="col-start-1 row-start-1 size-full" aria-hidden="true">
        <path
          d="M2 82V70Q2 66 4 62L31 12Q36 3 45 3H220V80H2Z"
          fill="#50595f"
          stroke="#1f282d"
          strokeWidth="4"
        />
        <path
          d="M3 79V70Q3 66 5 62L32 13Q37 4 45 4H220V79Z"
          fill="none"
          stroke="#6c757a"
          strokeWidth="2"
        />
      </svg>
      <div className="col-start-1 row-start-1 flex flex-col items-end justify-between pb-2 pr-2.5 pt-1.5">
        <div className="flex items-center gap-[17px] pr-1">
          <button type="button" aria-label="Audio tool" className="text-[#737c80]">
            <WaveIcon className="h-7 w-[41px]" />
          </button>
          <button type="button" aria-label="Automation tool" className="text-[#e8edf0]">
            <CurveIcon className="h-[27px] w-8" />
          </button>
          <button type="button" aria-label="Pattern tool" className="text-[#737c80]">
            <KeysIcon className="h-[22px] w-[31px]" />
          </button>
        </div>
        <div className="flex gap-3.5">
          <ModeRadio label="STEP" />
          <ModeRadio label="SLIDE" />
        </div>
      </div>
    </div>
  )
}

function Overview() {
  return (
    <div className="flex h-10 items-stretch border-t-2 border-[#20292e] bg-[#373f47]">
      <IconButton label="Scroll left" className="w-10">
        <svg viewBox="0 0 10 20" className="h-5 w-2.5" fill="none" stroke="currentColor" strokeWidth="2">
          <path d="M9 2L1 10L9 18" />
        </svg>
      </IconButton>
      <div className="flex min-w-0 flex-1 bg-[#373f47]">
        <div className="w-[89.7%] border-2 border-[#636e73] bg-[#4e5e64]">
          <svg viewBox="0 0 114 34" preserveAspectRatio="none" className="h-full w-full" aria-hidden="true">
            {tracks.flatMap((track, row) =>
              track.clips.map((clip, i) => (
                <rect
                  key={`${row}-${i}`}
                  x={clip.start - 1}
                  y={row + 0.5}
                  width={clip.length}
                  height="1"
                  fill={toneFill[clip.tone]}
                  opacity={clip.tone === "grey" ? 0.5 : 1}
                />
              )),
            )}
            <rect x="0" y="30" width="111" height="1" fill={toneFill.blue} />
            <rect x="0" y="32" width="111" height="1" fill={toneFill.red} />
          </svg>
        </div>
      </div>
      <IconButton label="Scroll right" className="w-[38px]">
        <svg viewBox="0 0 10 20" className="h-5 w-2.5" fill="none" stroke="currentColor" strokeWidth="2">
          <path d="M1 2L9 10L1 18" />
        </svg>
      </IconButton>
    </div>
  )
}

function Ruler() {
  return (
    <div className="mt-0.5 grid h-[38px] grid-cols-[repeat(114,minmax(0,1fr))] border-b-2 border-t-2 border-b-[#b56c6c] border-t-[#c27c7a] bg-gradient-to-b from-[#a45b5d] to-[#985054]">
      {Array.from({ length: 29 }, (_, i) => i * 4 + 1).map((bar) => (
        <span
          key={bar}
          className="col-span-2 row-start-1 self-center pt-1 font-['Roboto_Condensed','Roboto',sans-serif] text-[21px] font-medium leading-none text-[#f9c6c4]"
          style={{ gridColumnStart: bar }}
        >
          {bar}
        </span>
      ))}
      <svg viewBox="0 0 17 21" className="col-start-1 row-start-1 h-[21px] w-[17px]" aria-hidden="true">
        <path d="M0 1H15Q17 2 15 6L6 16L0 19Z" fill="#a6e04a" stroke="#23300f" strokeWidth="1.5" />
        <path d="M0 3H13L5 14" fill="none" stroke="#f3ffb0" strokeWidth="1.5" />
      </svg>
    </div>
  )
}

function BarGrid() {
  return (
    <div className="col-start-1 row-start-1 grid grid-cols-[repeat(57,minmax(0,1fr))]">
      {Array.from({ length: BARS / 2 }, (_, i) => (
        <div
          key={i}
          className={`border-l-2 border-[#1f2830] ${Math.floor(i / 2) % 2 ? "bg-[#3c434b]" : "bg-[#434a52]"}`}
        />
      ))}
    </div>
  )
}

function Playlist() {
  return (
    <main className="ml-[11px] mt-1.5 flex min-w-0 flex-1 flex-col border-t-2 border-[#262f35]">
      <div className="flex h-[82px] shrink-0">
        <ToolTab />
        <div className="min-w-0 flex-1">
          <Overview />
          <Ruler />
        </div>
        <div className="flex w-[41px] shrink-0 flex-col gap-0.5 border-t-2 border-[#20292e] bg-[#20292e] pl-[3px]">
          <IconButton label="Zoom" className="h-[38px] w-[38px]">
            <i className="h-2 w-1 bg-[#1c2226]" />
          </IconButton>
          <IconButton label="Scroll up" className="h-[38px] w-[38px]">
            <svg viewBox="0 0 18 10" className="h-2.5 w-[18px]" fill="none" stroke="currentColor" strokeWidth="2">
              <path d="M1 9L9 1L17 9" />
            </svg>
          </IconButton>
        </div>
      </div>
      <div className="flex min-h-0 flex-1 overflow-hidden border-l-2 border-[#1f282d]">
        <div className="w-[201px] shrink-0 border-r-2 border-[#1c272d] bg-[#1c272d] pr-0.5">
          {tracks.map((track) => (
            <TrackHeader key={track.id} track={track} />
          ))}
        </div>
        <div className="w-5 shrink-0 border-r-2 border-[#1f282d] bg-[#33424a]">
          {tracks.map((track) => (
            <div
              key={track.id}
              className={`border-b-2 border-[#243036] ${rowHeight[track.size]} ${
                track.id === 16 ? "rounded-[3px] outline-2 -outline-offset-2 outline-[#a6e02f]" : ""
              }`}
            />
          ))}
        </div>
        <div className="grid min-w-0 flex-1 content-start">
          <BarGrid />
          <div className="col-start-1 row-start-1 min-w-0">
            {tracks.map((track) => (
              <Lane key={track.id} track={track} />
            ))}
          </div>
        </div>
        <div className="flex w-[41px] shrink-0 flex-col border-l-[3px] border-[#20292e] bg-[repeating-linear-gradient(45deg,#3b434a_0_2px,#363e45_2px_4px)]">
          <button
            type="button"
            aria-label="Vertical scroll"
            className="h-[66px] w-full border-2 border-[#697177] bg-[#50585e]"
          />
        </div>
      </div>
    </main>
  )
}

export default function App() {
  return (
    <div className="flex h-screen min-h-0 overflow-hidden bg-[#40484e] pr-1 font-['Roboto',sans-serif]">
      <PatternPicker />
      <Playlist />
    </div>
  )
}
